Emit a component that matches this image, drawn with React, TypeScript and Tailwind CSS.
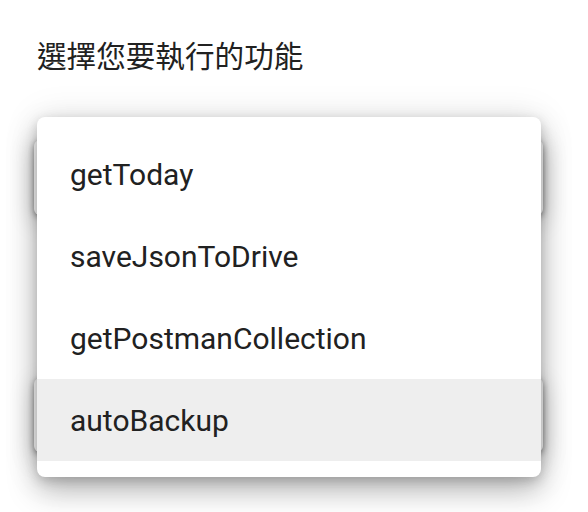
import React from "react";

const items = ["getToday", "saveJsonToDrive", "getPostmanCollection", "autoBackup"];

export default function App() {
  return (
    <div className="relative w-[588px] h-[512px] bg-white overflow-hidden" style={{ fontFamily: "Roboto, 'Noto Sans CJK TC', sans-serif" }}>
      <div className="flex flex-col pl-[37px] pr-[45px] pt-[40px]">
        <div className="text-[29.6px] leading-[30px] h-[30px] text-[#212121]" style={{ fontFamily: "'Noto Sans CJK TC', sans-serif" }}>
          選擇您要執行的功能
        </div>
        <div className="mt-[70px] h-[75px] -ml-[3px] rounded-[6px] bg-white shadow-[0_2px_6px_rgba(0,0,0,0.4),0_6px_24px_rgba(0,0,0,0.22)]" />
        <div className="mt-[163px] h-[74px] -ml-[3px] rounded-[6px] bg-white shadow-[0_2px_6px_rgba(0,0,0,0.4),0_6px_24px_rgba(0,0,0,0.22)]" />
      </div>
      <div className="absolute left-[37px] top-[117px] w-[504px] rounded-[8px] bg-white py-[16px] shadow-[0_14px_30px_rgba(0,0,0,0.26),0_4px_12px_rgba(0,0,0,0.16),0_0_36px_rgba(0,0,0,0.1)]">
        {items.map((it, i) => (
          <div
            key={it}
            className={`flex items-center h-[82px] pl-[33px] text-[30px] text-[#212121] ${i === 3 ? "bg-[#eeeeee]" : ""}`}
          >
            {it}
          </div>
        ))}
      </div>
    </div>
  );
}
